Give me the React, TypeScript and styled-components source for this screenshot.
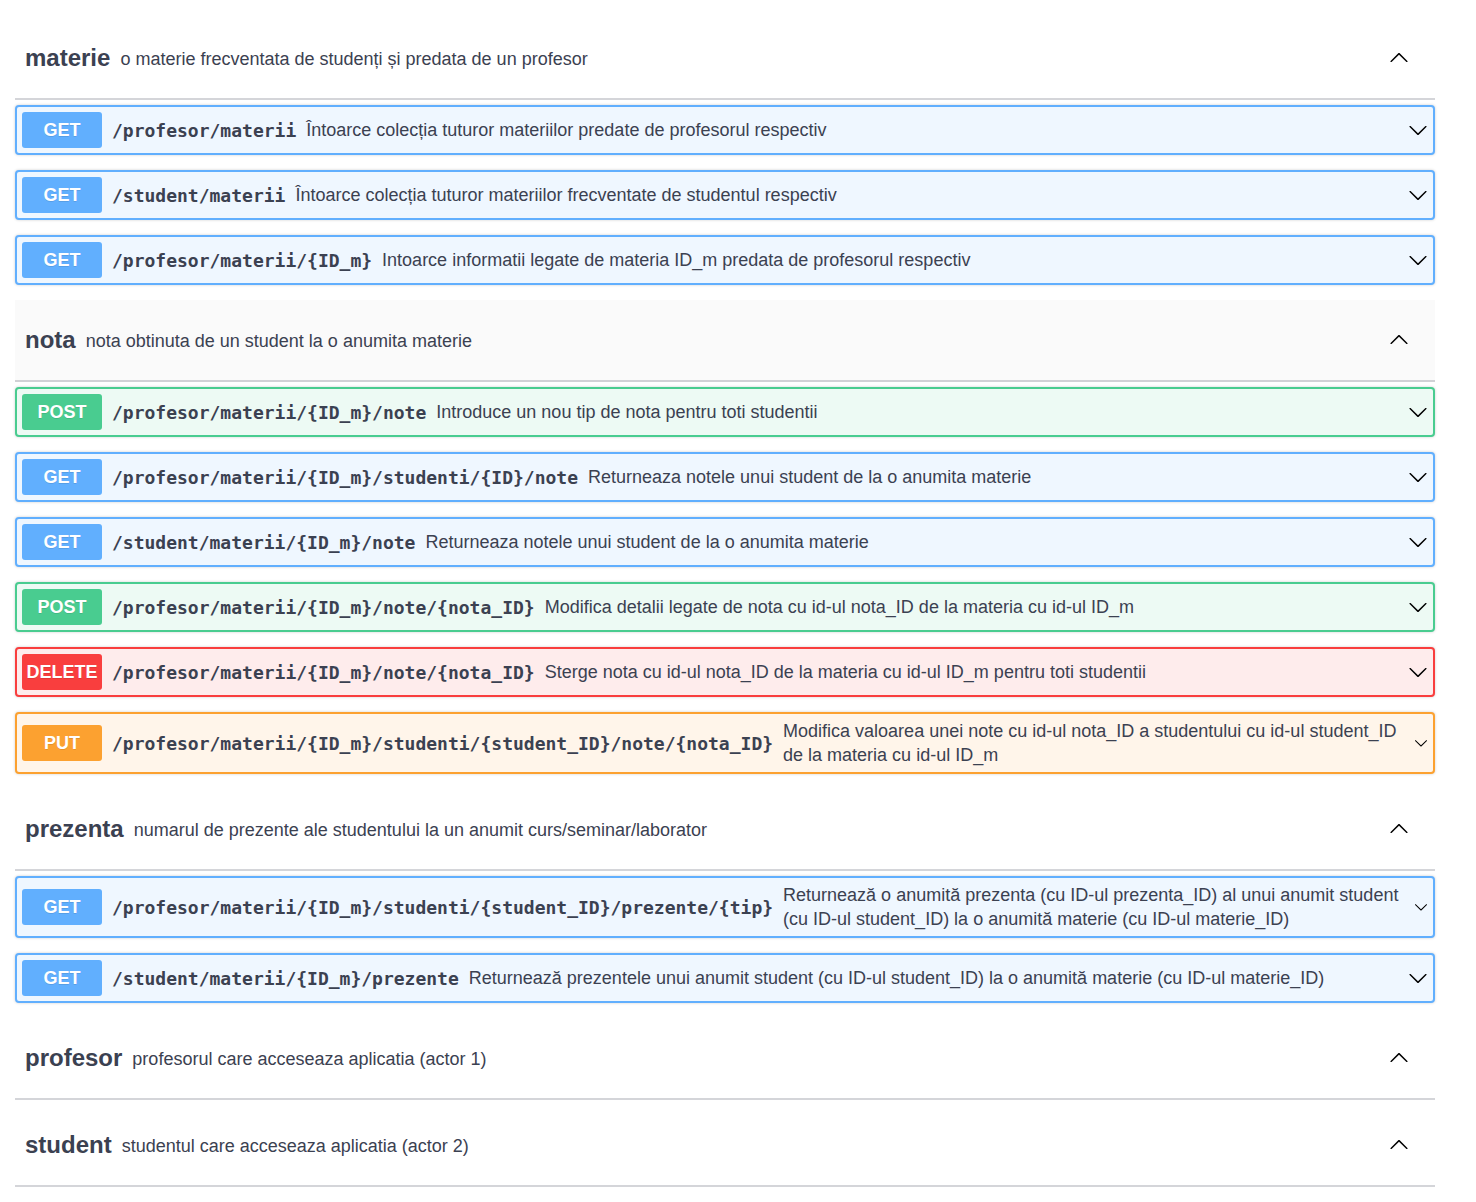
import React from "react";
import styled, { createGlobalStyle } from "styled-components";

const GlobalStyle = createGlobalStyle`
  html, body { margin: 0; padding: 0; background: #ffffff; }
  body { font-family: "Liberation Sans", Arial, Helvetica, sans-serif; color: #3b4151; }
  * { box-sizing: border-box; }
`;

type Method = "GET" | "POST" | "DELETE" | "PUT";

const COLORS: Record<Method, { main: string; bg: string }> = {
  GET: { main: "#61affe", bg: "#eff7ff" },
  POST: { main: "#49cc90", bg: "#edfaf4" },
  DELETE: { main: "#f93e3e", bg: "#feecec" },
  PUT: { main: "#fca130", bg: "#fff5ea" },
};

interface Op {
  method: Method;
  path: string;
  desc: string;
  compact?: boolean;
}

interface Section {
  name: string;
  desc: string;
  hover?: boolean;
  ops: Op[];
}

const sections: Section[] = [
  {
    name: "materie",
    desc: "o materie frecventata de studenți și predata de un profesor",
    ops: [
      { method: "GET", path: "/profesor/materii", desc: "Întoarce colecția tuturor materiilor predate de profesorul respectiv" },
      { method: "GET", path: "/student/materii", desc: "Întoarce colecția tuturor materiilor frecventate de studentul respectiv" },
      { method: "GET", path: "/profesor/materii/{ID_m}", desc: "Intoarce informatii legate de materia ID_m predata de profesorul respectiv" },
    ],
  },
  {
    name: "nota",
    desc: "nota obtinuta de un student la o anumita materie",
    hover: true,
    ops: [
      { method: "POST", path: "/profesor/materii/{ID_m}/note", desc: "Introduce un nou tip de nota pentru toti studentii" },
      { method: "GET", path: "/profesor/materii/{ID_m}/studenti/{ID}/note", desc: "Returneaza notele unui student de la o anumita materie" },
      { method: "GET", path: "/student/materii/{ID_m}/note", desc: "Returneaza notele unui student de la o anumita materie" },
      { method: "POST", path: "/profesor/materii/{ID_m}/note/{nota_ID}", desc: "Modifica detalii legate de nota cu id-ul nota_ID de la materia cu id-ul ID_m" },
      { method: "DELETE", path: "/profesor/materii/{ID_m}/note/{nota_ID}", desc: "Sterge nota cu id-ul nota_ID de la materia cu id-ul ID_m pentru toti studentii" },
      {
        method: "PUT",
        path: "/profesor/materii/{ID_m}/studenti/{student_ID}/note/{nota_ID}",
        desc: "Modifica valoarea unei note cu id-ul nota_ID a studentului cu id-ul student_ID de la materia cu id-ul ID_m",
        compact: true,
      },
    ],
  },
  {
    name: "prezenta",
    desc: "numarul de prezente ale studentului la un anumit curs/seminar/laborator",
    ops: [
      {
        method: "GET",
        path: "/profesor/materii/{ID_m}/studenti/{student_ID}/prezente/{tip}",
        desc: "Returnează o anumită prezenta (cu ID-ul prezenta_ID) al unui anumit student (cu ID-ul student_ID) la o anumită materie (cu ID-ul materie_ID)",
        compact: true,
      },
      {
        method: "GET",
        path: "/student/materii/{ID_m}/prezente",
        desc: "Returnează prezentele unui anumit student (cu ID-ul student_ID) la o anumită materie (cu ID-ul materie_ID)",
      },
    ],
  },
  { name: "profesor", desc: "profesorul care acceseaza aplicatia (actor 1)", ops: [] },
  { name: "student", desc: "studentul care acceseaza aplicatia (actor 2)", ops: [] },
];

const Page = styled.div`
  width: 1420px;
  margin-left: 15px;
  padding-top: 18px;
`;

const TagSection = styled.section`
  display: flex;
  flex-direction: column;
`;

const TagHeader = styled.div<{ $hover?: boolean }>`
  display: flex;
  align-items: center;
  height: 82px;
  padding: 0 26px 0 10px;
  border-bottom: 2px solid rgba(59, 65, 81, 0.22);
  background: ${(p) => (p.$hover ? "#fafafa" : "transparent")};
  margin-bottom: 5px;
`;

const TagTitle = styled.span`
  font-size: 24px;
  font-weight: 700;
  color: #3b4151;
`;

const TagDesc = styled.span`
  flex: 1;
  font-size: 18px;
  padding: 0 10px;
  color: #3b4151;
  margin-top: 2px;
`;

const Block = styled.div<{ $method: Method }>`
  display: flex;
  align-items: center;
  margin-bottom: 15px;
  padding: 5px;
  border: 2px solid ${(p) => COLORS[p.$method].main};
  background: ${(p) => COLORS[p.$method].bg};
  border-radius: 4px;
  box-shadow: 0 0 3px rgba(0, 0, 0, 0.19);
`;

const Badge = styled.span<{ $method: Method }>`
  flex: none;
  width: 80px;
  height: 36px;
  display: flex;
  align-items: center;
  justify-content: center;
  border-radius: 3px;
  background: ${(p) => COLORS[p.$method].main};
  color: #ffffff;
  font-size: 18px;
  font-weight: 700;
  text-shadow: 0 1px 0 rgba(0, 0, 0, 0.1);
`;

const Path = styled.span`
  flex: none;
  padding: 0 10px;
  font-family: "DejaVu Sans Mono", "Liberation Mono", monospace;
  font-weight: 700;
  font-size: 18px;
  color: #3b4151;
  white-space: nowrap;
`;

const Desc = styled.span`
  flex: 1 1 auto;
  font-size: 18px;
  line-height: 24px;
  padding-right: 8px;
  color: #3b4151;
`;

const ArrowBox = styled.span<{ $size: number }>`
  flex: none;
  width: ${(p) => (p.$size < 20 ? p.$size + 1 : 20)}px;
  height: 20px;
  display: flex;
  align-items: center;
  justify-content: center;
  svg {
    width: ${(p) => p.$size}px;
    height: ${(p) => p.$size}px;
  }
`;

const Arrow = ({ up, size = 20 }: { up?: boolean; size?: number }) => (
  <ArrowBox $size={size}>
    <svg viewBox="0 0 20 20" style={up ? { transform: "rotate(180deg)" } : undefined}>
      <path
        fill="#000"
        d="M17.418 6.109c.272-.268.709-.268.979 0s.27.701 0 .969l-7.908 7.83c-.27.268-.707.268-.979 0l-7.908-7.83c-.27-.268-.27-.701 0-.969.271-.268.709-.268.979 0L10 13.25l7.418-7.141z"
      />
    </svg>
  </ArrowBox>
);

export default function App() {
  return (
    <>
      <GlobalStyle />
      <Page>
        {sections.map((s) => (
          <TagSection key={s.name}>
            <TagHeader $hover={s.hover}>
              <TagTitle>{s.name}</TagTitle>
              <TagDesc>{s.desc}</TagDesc>
              <Arrow up />
            </TagHeader>
            {s.ops.map((op, i) => (
              <Block key={i} $method={op.method}>
                <Badge $method={op.method}>{op.method}</Badge>
                <Path>{op.path}</Path>
                <Desc>{op.desc}</Desc>
                <Arrow size={op.compact ? 14 : 20} />
              </Block>
            ))}
          </TagSection>
        ))}
      </Page>
    </>
  );
}
